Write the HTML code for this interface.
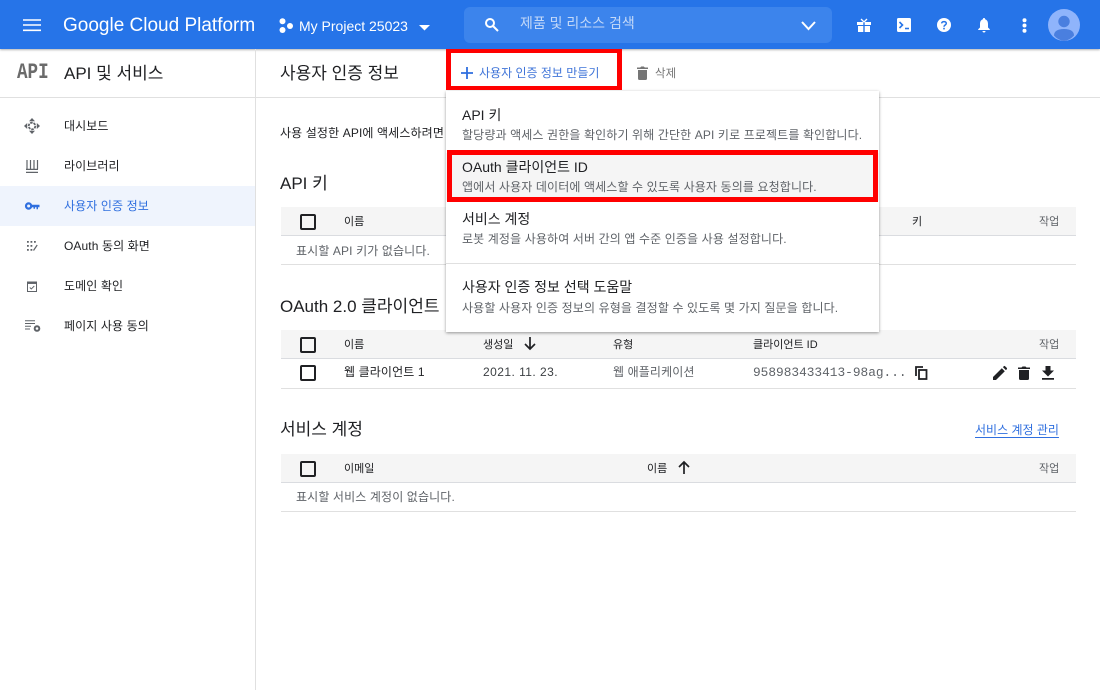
<!DOCTYPE html>
<html lang="ko"><head><meta charset="utf-8">
<style>
html,body{margin:0;padding:0;background:#fff}
#p{position:relative;width:1100px;height:690px;overflow:hidden;background:#fff;font-family:"Liberation Sans","Noto Sans CJK KR",sans-serif;color:#202124}
.t{position:absolute;white-space:nowrap;line-height:20px;height:20px}
.b{position:absolute}
svg{position:absolute;overflow:visible}
.s12{font-size:12px;letter-spacing:.12px}
.nav{font-size:12px;left:64px;letter-spacing:.1px}
.h{font-size:17px;left:280px}
.hd{font-size:11px;color:#202124}
.gr{color:#5f6368}
.cb{position:absolute;left:300px;width:12px;height:12px;border:2px solid #202124;border-radius:2px}
.row{position:absolute;left:281px;width:795px;background:#f5f5f5;border-bottom:1px solid #dadce0;height:28px}
.line{position:absolute;left:281px;width:795px;height:1px;background:#e0e0e0}
.mt{font-size:14px;left:462px;color:#202124}
.ms{font-size:12px;left:462px;color:#5f6368;letter-spacing:.12px}
</style></head><body><div id="p">

<!-- top bar -->
<div class="b" style="left:0;top:0;width:1100px;height:49px;background:#2674e8;box-shadow:0 1px 2px rgba(0,0,0,.3)"></div>
<svg style="left:23px;top:19px" width="18" height="13"><path d="M0 1h18M0 6h18M0 11.300h18" stroke="#fff" stroke-width="1.600"/></svg>
<div class="t" style="left:63px;top:16px;font-size:19px;color:#fff">Google Cloud Platform</div>
<svg style="left:279px;top:18px" width="14" height="15" fill="#fff"><circle cx="3.500" cy="3.200" r="3"/><circle cx="3.500" cy="12" r="3"/><circle cx="11" cy="8" r="3"/></svg>
<div class="t" style="left:299px;top:16px;font-size:14px;color:#fff">My Project 25023</div>
<svg style="left:419px;top:25px" width="11" height="6"><path d="M0 0h11L5.500 5.500z" fill="#fff"/></svg>

<!-- search -->
<div class="b" style="left:464px;top:7px;width:368px;height:36px;background:#3c84ec;border-radius:6px"></div>
<svg style="left:484px;top:17px" width="16" height="16" fill="none" stroke="#fff" stroke-width="2"><circle cx="6" cy="6" r="4"/><path d="M9 9l5 5"/></svg>
<div class="t" style="left:520px;top:13px;font-size:14px;color:#c4d9f8">제품 및 리소스 검색</div>
<svg style="left:801px;top:21px" width="15" height="10" fill="none" stroke="#fff" stroke-width="2"><path d="M1 1l6.500 7L14 1"/></svg>

<!-- top icons -->
<svg style="left:857px;top:18px" width="14" height="15" fill="#fff"><path d="M0 4h6.300v3H0zM7.700 4H14v3H7.700zM1 8h5.300v6H1zM7.700 8H13v6H7.700z"/><path d="M7 4L4 1M7 4l3-3" stroke="#fff" stroke-width="1.300" fill="none"/></svg>
<svg style="left:897px;top:18px" width="14" height="14"><rect width="14" height="14" rx="1.500" fill="#fff"/><path d="M2.500 4l3 3-3 3" stroke="#2674e8" stroke-width="1.600" fill="none"/><path d="M8 10.500h4" stroke="#2674e8" stroke-width="1.600"/></svg>
<svg style="left:937px;top:18px" width="14" height="14"><circle cx="7" cy="7" r="7" fill="#fff"/><path d="M4.700 5.400C4.700 3 9.300 3 9.300 5.400 9.300 7 7 7 7 8.700" stroke="#2674e8" stroke-width="1.500" fill="none"/><rect x="6.200" y="9.800" width="1.600" height="1.600" fill="#2674e8"/></svg>
<svg style="left:978px;top:18px" width="12" height="15" fill="#fff"><path d="M6 0a1 1 0 0 1 1 1.200C9.300 1.800 10 3.800 10 6v3.500l1.800 1.700v.8H.2v-.8L2 9.500V6c0-2.200.7-4.200 3-4.800A1 1 0 0 1 6 0z"/><path d="M4.500 13h3a1.500 1.500 0 0 1-3 0z"/></svg>
<svg style="left:1021.500px;top:18px" width="5" height="15" fill="#fff"><circle cx="2.500" cy="2.200" r="2"/><circle cx="2.500" cy="7.500" r="2"/><circle cx="2.500" cy="12.800" r="2"/></svg>
<svg style="left:1048px;top:9px" width="32" height="32"><circle cx="16" cy="16" r="16" fill="#8fb4fb"/><circle cx="16" cy="12.500" r="5.700" fill="#4a7fdf"/><path d="M6 26.500C6 21.500 11 20 16 20s10 1.500 10 6.500A16 16 0 0 1 16 32a16 16 0 0 1-10-5.500z" fill="#4a7fdf"/></svg>

<!-- sub-header -->
<div class="b" style="left:0;top:97px;width:1100px;height:1px;background:#e0e0e0"></div>
<div class="b" style="left:255px;top:49px;width:1px;height:641px;background:#e0e0e0"></div>
<div class="t" style="left:17px;top:63px;font-family:'Liberation Mono',monospace;font-weight:700;font-size:22px;color:#6b6b6b;transform:scaleX(.8);transform-origin:left center">API</div>
<div class="t" style="left:64px;top:64px;font-size:17px">API 및 서비스</div>
<div class="t" style="left:280px;top:64px;font-size:17px">사용자 인증 정보</div>

<!-- nav -->
<div class="b" style="left:0;top:186px;width:255px;height:40px;background:#eff4fd"></div>
<svg style="left:24px;top:118px" width="16" height="16" fill="#5f6368"><path d="M8 0l3 3.200H5zM8 16l-3-3.200h6zM0 8l3.200-3v6zM16 8l-3.200 3V5z"/><circle cx="8" cy="8" r="3.300" fill="none" stroke="#5f6368" stroke-width="1.800" stroke-dasharray="2.500 .9"/></svg>
<div class="t nav" style="top:116px">대시보드</div>
<svg style="left:26px;top:159px" width="13" height="14" fill="none" stroke="#5f6368" stroke-width="1.200"><path d="M0 13.400h12M0 10.400h12M1 1v9M4.500 1v9M8 1v9M11.500 1v9"/></svg>
<div class="t nav" style="top:156px">라이브러리</div>
<svg style="left:25px;top:202px" width="15" height="8"><circle cx="3.600" cy="4" r="2.600" fill="none" stroke="#2f6fdf" stroke-width="2.200"/><path d="M6 2.800h8.500v2.400H13v2h-1.500v-2H10v1.500H8.500V5.200H6z" fill="#2f6fdf"/></svg>
<div class="t nav" style="top:196px;color:#2f6fdf">사용자 인증 정보</div>
<svg style="left:27px;top:241px" width="11" height="11" fill="#5f6368"><path d="M0 0h1.800v1.800H0zM3.500 0h1.800v1.800H3.500zM7 0h1.800v1.800H7zM0 4h1.800v1.800H0zM3.500 4h1.800v1.800H3.500zM0 8h1.800v1.800H0zM3.500 8h1.800v1.800H3.500z"/><path d="M6.500 9.500l3.700-5.500" stroke="#5f6368" stroke-width="1.200"/></svg>
<div class="t nav" style="top:236px">OAuth 동의 화면</div>
<svg style="left:27px;top:281px" width="10" height="11" fill="none" stroke="#5f6368" stroke-width="1"><rect x=".5" y="1" width="9" height="9.500"/><path d="M.5 2.200h9" stroke-width="1.500"/><path d="M2.800 6.500l1.500 1.500 3-3" stroke-width=".9"/></svg>
<div class="t nav" style="top:276px">도메인 확인</div>
<svg style="left:25px;top:320px" width="16" height="12"><path d="M0 .7h10M0 3.500h10M0 6.300h6M0 9h5" stroke="#5f6368" stroke-width="1"/><circle cx="12" cy="8.500" r="2.300" fill="none" stroke="#5f6368" stroke-width="2"/></svg>
<div class="t nav" style="top:316px">페이지 사용 동의</div>

<!-- main -->
<div class="t s12" style="left:280px;top:123px">사용 설정한 API에 액세스하려면</div>

<div class="t h" style="top:174px">API 키</div>
<div class="row" style="top:207px"></div>
<div class="cb" style="top:214px"></div>
<div class="t hd" style="left:344px;top:212px">이름</div>
<div class="t hd" style="left:912px;top:212px">키</div>
<div class="t hd gr" style="left:1039px;top:212px">작업</div>
<div class="t s12 gr" style="left:296px;top:241px">표시할 API 키가 없습니다.</div>
<div class="line" style="top:264px"></div>

<div class="t h" style="top:297px">OAuth 2.0 클라이언트</div>
<div class="row" style="top:330px"></div>
<div class="cb" style="top:337px"></div>
<div class="t hd" style="left:344px;top:335px">이름</div>
<div class="t hd" style="left:483px;top:335px">생성일</div>
<svg style="left:524px;top:337px" width="12" height="13" fill="none" stroke="#202124" stroke-width="1.700"><path d="M6 0v12M1 7l5 5 5-5"/></svg>
<div class="t hd" style="left:613px;top:335px">유형</div>
<div class="t hd" style="left:753px;top:335px">클라이언트 ID</div>
<div class="t hd gr" style="left:1039px;top:335px">작업</div>
<div class="cb" style="top:365px"></div>
<div class="t s12" style="left:344px;top:362px">웹 클라이언트 1</div>
<div class="t" style="left:483px;top:362px;font-size:12px;letter-spacing:.45px;color:#3c4043">2021. 11. 23.</div>
<div class="t s12 gr" style="left:613px;top:362px">웹 애플리케이션</div>
<div class="t" style="left:753px;top:363px;font-family:'Liberation Mono',monospace;font-size:12.800px;color:#5f6368">958983433413-98ag...</div>
<svg style="left:915px;top:366px" width="13" height="14" fill="none" stroke="#202124" stroke-width="1.800"><path d="M1 10V1h7"/><rect x="4" y="4" width="7.500" height="9"/></svg>
<svg style="left:993px;top:366px" width="14" height="14" fill="#202124"><path d="M0 14v-3L8.800 2.200l3 3L3 14zM9.900 1.100l.9-.9a1 1 0 0 1 1.300 0l1.700 1.700a1 1 0 0 1 0 1.300l-.9.900z"/></svg>
<svg style="left:1018px;top:366px" width="12" height="14" fill="#202124"><path d="M0 1.500h3.500L4.500.5h3l1 1H12V3H0zM1 4h10v8.500A1.500 1.500 0 0 1 9.500 14h-7A1.500 1.500 0 0 1 1 12.500z"/></svg>
<svg style="left:1042px;top:366px" width="12" height="14" fill="#202124"><path d="M3.500 0h5v4.500H12L6 10.500 0 4.500h3.500zM0 12h12v1.700H0z"/></svg>
<div class="line" style="top:388px"></div>

<div class="t h" style="top:420px">서비스 계정</div>
<div class="t" style="left:975px;top:420px;font-size:12px;color:#2f6fdf;text-decoration:underline;text-underline-offset:3px">서비스 계정 관리</div>
<div class="row" style="top:454px"></div>
<div class="cb" style="top:461px"></div>
<div class="t hd" style="left:344px;top:459px">이메일</div>
<div class="t hd" style="left:647px;top:459px">이름</div>
<svg style="left:678px;top:461px" width="12" height="13" fill="none" stroke="#202124" stroke-width="1.700"><path d="M6 13V1M1 6l5-5 5 5"/></svg>
<div class="t hd gr" style="left:1039px;top:459px">작업</div>
<div class="t s12 gr" style="left:296px;top:487px">표시할 서비스 계정이 없습니다.</div>
<div class="line" style="top:511px"></div>

<!-- action bar -->
<svg style="left:461px;top:67px" width="12" height="12"><path d="M6 0v12M0 6h12" stroke="#2f6fdf" stroke-width="1.800"/></svg>
<div class="t" style="left:479px;top:63px;font-size:12px;color:#3f74d8">사용자 인증 정보 만들기</div>
<svg style="left:637px;top:66px" width="11" height="14" fill="#757575"><path d="M0 1.500h3.200l1-1h2.600l1 1H11V3H0zM1 4h9v8.500A1.500 1.500 0 0 1 8.500 14h-6A1.500 1.500 0 0 1 1 12.500z"/></svg>
<div class="t" style="left:655px;top:64px;font-size:11.500px;color:#757575">삭제</div>

<!-- menu -->
<div class="b" style="left:446px;top:91px;width:433px;height:241px;background:#fff;box-shadow:0 1px 3px rgba(0,0,0,.4)"></div>
<div class="b" style="left:446px;top:153px;width:433px;height:48px;background:#f5f5f5"></div>
<div class="b" style="left:446px;top:263px;width:433px;height:1px;background:#e0e0e0"></div>
<div class="t mt" style="top:105px">API 키</div>
<div class="t ms" style="top:125px">할당량과 액세스 권한을 확인하기 위해 간단한 API 키로 프로젝트를 확인합니다.</div>
<div class="t mt" style="top:157px">OAuth 클라이언트 ID</div>
<div class="t ms" style="top:177px">앱에서 사용자 데이터에 액세스할 수 있도록 사용자 동의를 요청합니다.</div>
<div class="t mt" style="top:209px">서비스 계정</div>
<div class="t ms" style="top:229px">로봇 계정을 사용하여 서버 간의 앱 수준 인증을 사용 설정합니다.</div>
<div class="t mt" style="top:277px">사용자 인증 정보 선택 도움말</div>
<div class="t ms" style="top:298px">사용할 사용자 인증 정보의 유형을 결정할 수 있도록 몇 가지 질문을 합니다.</div>

<!-- red highlights -->
<div class="b" style="left:446px;top:49px;width:176px;height:41px;box-sizing:border-box;border:solid #f00;border-width:4px 5px"></div>
<div class="b" style="left:447px;top:150px;width:431px;height:52px;box-sizing:border-box;border:5px solid #f00"></div>

</div></body></html>
